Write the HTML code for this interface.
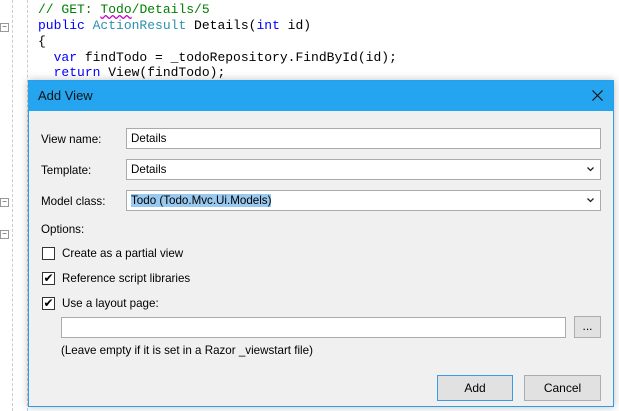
<!DOCTYPE html>
<html><head><style>
body{margin:0;width:619px;height:411px;background:#fff;position:relative;overflow:hidden;font-family:"Liberation Sans",sans-serif;}
.code{position:absolute;left:38px;font:13px "Liberation Mono",monospace;white-space:pre;color:#000;}
.kw{color:#0000ff}.ty{color:#2b91af}.cm{color:#008000}
.gut{position:absolute;top:0;bottom:0;border-left:1px dashed #ccc}
.fold{position:absolute;left:0;width:7px;height:7px;border:1px solid #999;background:#fff;font-size:8px;line-height:6px;text-align:center;color:#333}
.dlg{position:absolute;left:28px;top:80px;width:584px;height:325px;background:#f0f0f0;border:1px solid #2b9ee8;box-shadow:0 0 8px rgba(0,0,0,.25)}
.title{height:30px;background:#25a4ef;font-size:13px;line-height:30px;padding-left:9px;color:#111}
.lbl{position:absolute;font-size:11.6px;color:#000}
.inp{position:absolute;background:#fff;border:1px solid #aaa;box-sizing:border-box;font-size:11.6px;line-height:19px;padding-left:4px}
.chev{position:absolute;right:6px;top:7px}
.cb{position:absolute;left:13px;width:13px;height:13px;border:1px solid #333;background:#fff;box-sizing:border-box}
.btn{position:absolute;background:#e1e1e1;border:1px solid #adadad;box-sizing:border-box;font-size:12px;text-align:center;line-height:24px}
</style></head><body>
<div class="gut" style="left:12px"></div>
<div class="gut" style="left:27px"></div>
<div class="fold" style="top:23px">−</div>
<div class="fold" style="top:198px">−</div>
<div class="fold" style="top:230px">−</div>
<div class="code" style="top:2px"><span class="cm">// GET: <span style="text-decoration:underline wavy #c0c">Todo</span>/Details/5</span></div>
<div class="code" style="top:18px"><span class="kw">public</span> <span class="ty">ActionResult</span> Details(<span class="kw">int</span> id)</div>
<div class="code" style="top:34px">{</div>
<div class="code" style="top:50px">  <span class="kw">var</span> findTodo = _todoRepository.FindById(id);</div>
<div class="code" style="top:65px">  <span class="kw">return</span> View(findTodo);</div>
<div class="dlg">
<div class="title">Add View<svg style="position:absolute;right:10px;top:9px" width="11" height="11" viewBox="0 0 11 11"><path d="M0.5 0.5L10.5 10.5M10.5 0.5L0.5 10.5" stroke="#111" stroke-width="1.2"/></svg></div>
<div class="lbl" style="left:12px;top:52px">View name:</div>
<div class="inp" style="left:97px;top:47px;width:475px;height:21px">Details</div>
<div class="lbl" style="left:12px;top:83px">Template:</div>
<div class="inp" style="left:97px;top:78px;width:475px;height:21px">Details<svg class="chev" width="7" height="5"><path d="M0.5 0.5L3.5 3.5L6.5 0.5" stroke="#222" fill="none" stroke-width="1.3"/></svg></div>
<div class="lbl" style="left:12px;top:114px">Model class:</div>
<div class="inp" style="left:97px;top:109px;width:475px;height:21px"><span style="background:#99c9ef">Todo (Todo.Mvc.Ui.Models)</span><svg class="chev" width="7" height="5"><path d="M0.5 0.5L3.5 3.5L6.5 0.5" stroke="#222" fill="none" stroke-width="1.3"/></svg></div>
<div class="lbl" style="left:12px;top:142px">Options:</div>
<div class="cb" style="top:166px"></div><div class="lbl" style="left:33px;top:166px">Create as a partial view</div>
<div class="cb" style="top:191px;font-size:12px;line-height:11px;text-align:center">✔</div><div class="lbl" style="left:33px;top:191px">Reference script libraries</div>
<div class="cb" style="top:216px;font-size:12px;line-height:11px;text-align:center">✔</div><div class="lbl" style="left:33px;top:216px">Use a layout page:</div>
<div class="inp" style="left:32px;top:236px;width:505px;height:21px"></div>
<div class="btn" style="left:545px;top:235px;width:27px;height:22px;line-height:18px">...</div>
<div class="lbl" style="left:32px;top:263px">(Leave empty if it is set in a Razor _viewstart file)</div>
<div class="btn" style="left:408px;top:294px;width:76px;height:26px;border-color:#3c9be8">Add</div>
<div class="btn" style="left:495px;top:294px;width:77px;height:26px">Cancel</div>
</div>
</body></html>
